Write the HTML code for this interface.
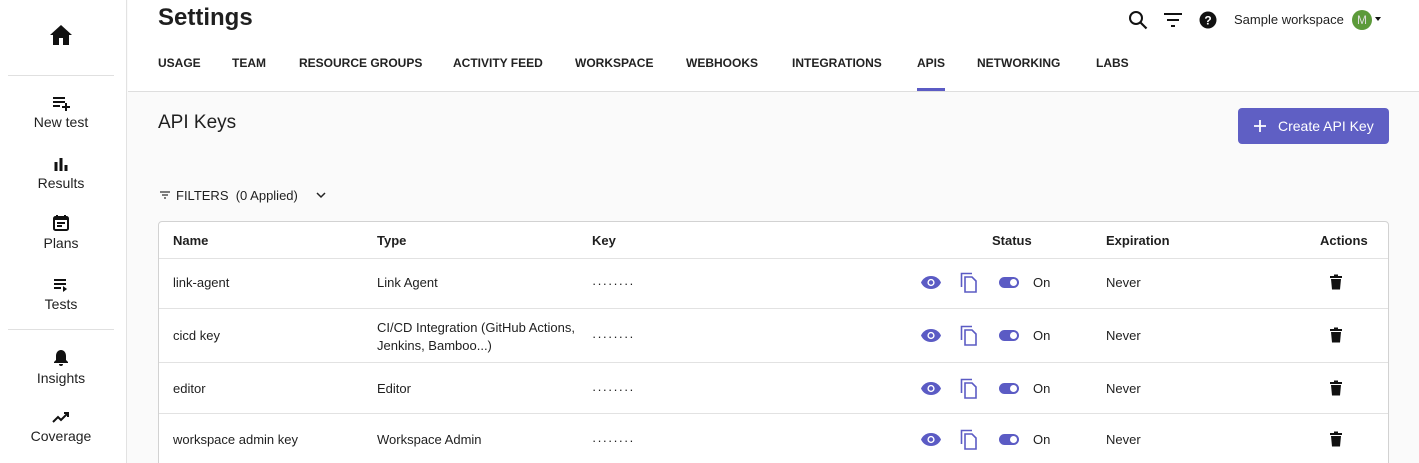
<!DOCTYPE html>
<html style="width:1419px;height:463px;overflow:hidden"><head><style>
*{box-sizing:border-box;margin:0;padding:0}
body{width:1419px;height:463px;overflow:hidden;font-family:"Liberation Sans",sans-serif;color:#1f1f1f;background:#fafafa;position:relative}
.sb{position:absolute;left:0;top:0;width:127px;height:463px;background:#fff;border-right:1px solid #e2e2e2}
.sb .hr{position:absolute;left:8px;width:106px;height:1px;background:#e0e0e0}
.sb .it{position:absolute;left:0;width:122px;text-align:center;font-size:14px}
.sb svg{display:block;margin:0 auto 3px}
.hd{position:absolute;left:128px;top:0;right:0;height:92px;background:#fff;border-bottom:1px solid #dedede}
.t{position:absolute;font-size:13px}
.tab{position:absolute;top:56px;font-size:12px;font-weight:bold;color:#222}
.tbl{position:absolute;left:158px;top:221px;width:1231px;height:260px;background:#fff;border:1px solid #d2d2d2;border-radius:4px;overflow:hidden}
.row{position:absolute;left:0;right:0;border-top:1px solid #e2e2e2}
.c{position:absolute;font-size:13px}
</style></head><body>
<div class="sb">
<svg style="position:absolute;left:49px;top:24px" width="24" height="22" viewBox="0 0 24 22"><path d="M12 1 1 11h3v10h6v-7h4v7h6V11h3z" fill="#111"/></svg>
<div class="hr" style="top:75px"></div>
<div class="it" style="top:95px"><svg width="20" height="16" viewBox="0 0 20 16"><path d="M2 3h12M2 7h12M2 11h7M15 8v8M11 12h8" stroke="#111" stroke-width="2"/></svg>New test</div>
<div class="it" style="top:156px"><svg width="20" height="16" viewBox="0 0 20 16"><path d="M5 6v9M10 2v13M15 9v6" stroke="#111" stroke-width="3"/></svg>Results</div>
<div class="it" style="top:214px"><svg width="20" height="18" viewBox="0 0 20 18"><rect x="3" y="3" width="14" height="13" rx="1.5" fill="none" stroke="#111" stroke-width="2"/><path d="M3 5h14M6 1v3M14 1v3M6 9h8M6 12h5" stroke="#111" stroke-width="2"/></svg>Plans</div>
<div class="it" style="top:277px"><svg width="20" height="16" viewBox="0 0 20 16"><path d="M3 3h12M3 7h12M3 11h7" stroke="#111" stroke-width="2"/><path d="M12 9l4 3-4 3z" fill="#111"/></svg>Tests</div>
<div class="hr" style="top:329px"></div>
<div class="it" style="top:349px"><svg width="20" height="18" viewBox="0 0 20 18"><path d="M10 1c-3 0-5 2.5-5 6v4l-2 2v1h14v-1l-2-2V7c0-3.5-2-6-5-6zM8 15h4a2 2 0 0 1-4 0z" fill="#111"/></svg>Insights</div>
<div class="it" style="top:409px"><svg width="20" height="16" viewBox="0 0 20 16"><path d="M2 13l5-5 3 3 7-7M13 4h4v4" fill="none" stroke="#111" stroke-width="2"/></svg>Coverage</div>
</div>
<div class="hd"></div>
<div class="t" style="left:158px;top:4px;font-size:24px;font-weight:bold">Settings</div>
<svg style="position:absolute;left:1128px;top:10px" width="20" height="20" viewBox="0 0 20 20"><circle cx="8" cy="8" r="6" fill="none" stroke="#111" stroke-width="2"/><path d="M12.5 12.5l6 6" stroke="#111" stroke-width="2.2"/></svg>
<svg style="position:absolute;left:1163px;top:12px" width="20" height="16" viewBox="0 0 20 16"><path d="M1 2h18M4 8h12M8 14h4" stroke="#111" stroke-width="2"/></svg>
<svg style="position:absolute;left:1199px;top:11px" width="18" height="18" viewBox="0 0 18 18"><circle cx="9" cy="9" r="8.5" fill="#111"/><text x="9" y="13.5" font-size="12" font-weight="bold" fill="#fff" text-anchor="middle" font-family="Liberation Sans">?</text></svg>
<div class="t" style="left:1234px;top:12px">Sample workspace</div>
<div style="position:absolute;left:1352px;top:10px;width:20px;height:20px;border-radius:50%;background:#5c9a3a;color:#ddd;font-size:12px;text-align:center;line-height:20px">M</div>
<div style="position:absolute;left:1375px;top:17px;border:3.5px solid transparent;border-top:4px solid #111"></div>
<div class="tab" style="left:158px">USAGE</div>
<div class="tab" style="left:232px">TEAM</div>
<div class="tab" style="left:299px">RESOURCE GROUPS</div>
<div class="tab" style="left:453px">ACTIVITY FEED</div>
<div class="tab" style="left:575px">WORKSPACE</div>
<div class="tab" style="left:686px">WEBHOOKS</div>
<div class="tab" style="left:792px">INTEGRATIONS</div>
<div class="tab" style="left:917px">APIS</div>
<div style="position:absolute;left:917px;top:88px;width:28px;height:3px;background:#5b5bc4"></div>
<div class="tab" style="left:977px">NETWORKING</div>
<div class="tab" style="left:1096px">LABS</div>
<div class="t" style="left:158px;top:112px;font-size:19px">API Keys</div>
<div style="position:absolute;left:1238px;top:108px;width:151px;height:36px;background:#5f5fc4;border-radius:4px;color:#fff;font-size:14px;line-height:36px;padding-left:40px">Create API Key</div>
<svg style="position:absolute;left:1253px;top:119px" width="14" height="14"><path d="M7 1v12M1 7h12" stroke="#fff" stroke-width="1.8"/></svg>
<svg style="position:absolute;left:159px;top:190px" width="12" height="10"><path d="M1 2h10M3 5h6M5 8h2" stroke="#333" stroke-width="1.3"/></svg>
<div class="t" style="left:176px;top:188px">FILTERS&nbsp; (0 Applied)</div>
<svg style="position:absolute;left:315px;top:190px" width="12" height="10"><path d="M2 3l4 4 4-4" fill="none" stroke="#222" stroke-width="1.5"/></svg>
<div class="tbl">
<div class="c" style="left:14px;top:11px;font-weight:bold">Name</div>
<div class="c" style="left:218px;top:11px;font-weight:bold">Type</div>
<div class="c" style="left:433px;top:11px;font-weight:bold">Key</div>
<div class="c" style="left:833px;top:11px;font-weight:bold">Status</div>
<div class="c" style="left:947px;top:11px;font-weight:bold">Expiration</div>
<div class="c" style="left:1161px;top:11px;font-weight:bold">Actions</div>
<div class="row" style="top:36px;height:51px"></div>
<div class="row" style="top:86px;height:55px"></div>
<div class="row" style="top:140px;height:52px"></div>
<div class="row" style="top:191px;height:60px"></div>
</div>
<script>
var rows=[["link-agent","Link Agent",282],["cicd key","",335],["editor","Editor",388],["workspace admin key","Workspace Admin",439]];
var h="";
rows.forEach(function(r){var y=r[2];
h+='<div class="t" style="left:173px;top:'+(y-7)+'px">'+r[0]+'</div>';
if(r[1])h+='<div class="t" style="left:377px;top:'+(y-7)+'px">'+r[1]+'</div>';
else h+='<div class="t" style="left:377px;top:'+(y-16)+'px;line-height:18px">CI/CD Integration (GitHub Actions,<br>Jenkins, Bamboo...)</div>';
h+='<div class="t" style="left:592px;top:'+(y-6)+'px;letter-spacing:1px">········</div>';
h+='<svg style="position:absolute;left:921px;top:'+(y-6)+'px" width="20" height="13" viewBox="0 0 20 13"><path d="M10 0C5 0 1.5 3 0 6.5 1.5 10 5 13 10 13s8.5-3 10-6.5C18.5 3 15 0 10 0z" fill="#5b5bc4"/><circle cx="10" cy="6.5" r="3.6" fill="#fff"/><circle cx="10" cy="6.5" r="2.2" fill="#5b5bc4"/></svg>';
h+='<svg style="position:absolute;left:960px;top:'+(y-10)+'px" width="18" height="21" viewBox="0 0 18 21"><path d="M1.5 15V1.5H12" fill="none" stroke="#5b5bc4" stroke-width="1.6"/><path d="M5 5h7l4 4v11H5z" fill="none" stroke="#5b5bc4" stroke-width="1.6"/></svg>';
h+='<div style="position:absolute;left:999px;top:'+(y-5)+'px;width:20px;height:11px;border-radius:6px;background:#5b5bc4"><div style="position:absolute;right:2px;top:2px;width:7px;height:7px;border-radius:50%;background:#fff"></div></div>';
h+='<div class="t" style="left:1033px;top:'+(y-7)+'px">On</div>';
h+='<div class="t" style="left:1106px;top:'+(y-7)+'px">Never</div>';
h+='<svg style="position:absolute;left:1329px;top:'+(y-8)+'px" width="14" height="16" viewBox="0 0 14 16"><path d="M1 2h12v2H1zM5 0.5h4v2H5zM2 5h10l-1 10.5H3z" fill="#111"/></svg>';
});
document.body.insertAdjacentHTML("beforeend",h);
</script>
</body></html>
